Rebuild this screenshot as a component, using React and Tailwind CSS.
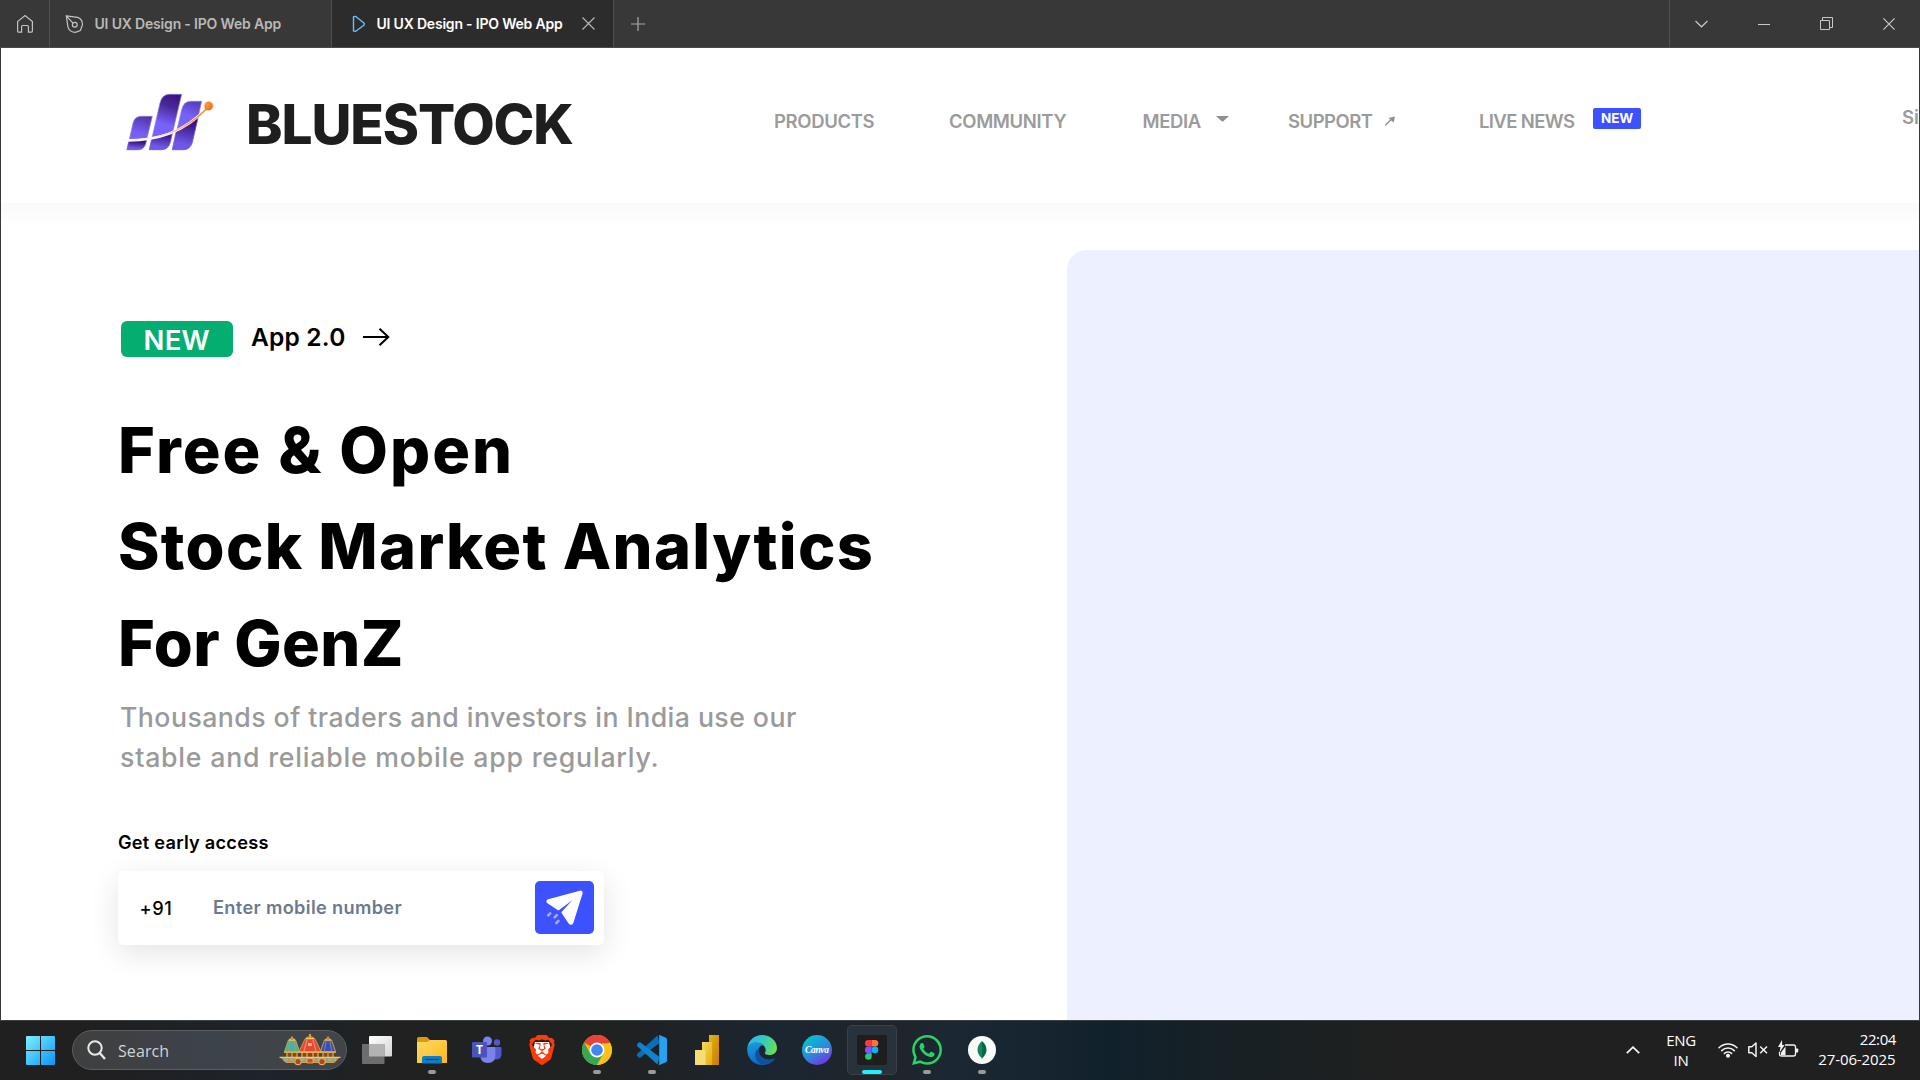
import { SiBrave, SiWhatsapp } from "react-icons/si";

function TitleBar() {
  return (
    <div className="flex h-12 shrink-0 border-b border-[#4a4a4a] bg-[#383838] text-[14px] leading-[47px] font-semibold text-[#b9b9b9]">
      <div className="flex w-[50px] items-center justify-center border-r border-[#505050]">
        <svg width="18" height="20" viewBox="0 0 18 20" fill="none" stroke="#c4c4c4" strokeWidth="1.2">
          <path d="M1.6 7.6 9 1.6l7.400 6v9.300a1.300 1.300 0 0 1-1.300 1.300h-2.700v-5.500a1.200 1.200 0 0 0-1.200-1.200H6.800a1.200 1.200 0 0 0-1.200 1.200v5.500H2.900a1.300 1.300 0 0 1-1.300-1.300z" />
        </svg>
      </div>
      <div className="flex w-[282px] items-center border-r border-[#505050]">
        <svg className="ml-[15px]" width="19" height="20" viewBox="0 0 19 20" fill="none" stroke="#c4c4c4" strokeWidth="1.200">
          <path d="M1.300 1.800 12.600 3.400c3 1 5 4.100 4.800 7.700l-2.100 5.400-4.800 1.800c-3.600-.1-6.700-2.400-7.600-5.500zM1.300 1.800l6.700 7.300" />
          <circle cx="9.800" cy="10.700" r="2.400" />
        </svg>
        <span className="ml-[10.500px] tracking-[-0.180px] whitespace-nowrap">UI UX Design - IPO Web App</span>
      </div>
      <div className="flex w-[282px] items-center border-r border-[#505050] bg-[#2c2c2c] text-white">
        <svg className="ml-[19.500px]" width="14" height="18" viewBox="0 0 14 18" fill="none" stroke="#6cbcff" strokeWidth="1.400" strokeLinejoin="round">
          <path d="M1.500 1.600v14.400l2.300 .2 8.400-6.200v-1.800L3.800 1.500z" />
        </svg>
        <span className="ml-[11px] w-[190px] tracking-[-0.200px] whitespace-nowrap">UI UX Design - IPO Web App</span>
        <svg className="ml-[15px]" width="13" height="13" viewBox="0 0 13 13" stroke="#b4b4b4" strokeWidth="1.200">
          <path d="m.500.500 12 12m0-12-12 12" />
        </svg>
      </div>
      <div className="flex flex-1 items-center">
        <svg className="ml-[17px]" width="14" height="14" viewBox="0 0 14 14" stroke="#a8a8a8" strokeWidth="1.200">
          <path d="M7 0v14M0 7h14" />
        </svg>
      </div>
      <div className="flex w-[251px] items-center border-l border-[#505050]">
        <svg className="ml-[25px]" width="13" height="8" viewBox="0 0 13 8" fill="none" stroke="#c8c8c8" strokeWidth="1.200">
          <path d="m.500 1 6 5.800 6-5.800" />
        </svg>
        <div className="mt-[2px] ml-[50px] h-px w-3 bg-[#c8c8c8]" />
        <svg className="ml-[50px]" width="13" height="13" viewBox="0 0 13 13" fill="none" stroke="#c8c8c8">
          <path d="M.500 3.500h9v9h-9zM2.500 3V.500h10v10H10" />
        </svg>
        <svg className="ml-[50px]" width="12" height="12" viewBox="0 0 12 12" stroke="#c8c8c8" strokeWidth="1.200">
          <path d="m.400.400 11.200 11.200m0-11.200L.400 11.600" />
        </svg>
      </div>
    </div>
  );
}

function Logo() {
  return (
    <svg width="104" height="72" viewBox="0 0 312 216">
      <defs>
        <linearGradient id="upA" x1="0.600" y1="0" x2="0.400" y2="1">
          <stop offset="0" stopColor="#5536aa" />
          <stop offset="0.500" stopColor="#755ff5" />
          <stop offset="1" stopColor="#7a63ff" />
        </linearGradient>
        <linearGradient id="upB" x1="0.600" y1="0" x2="0.400" y2="1">
          <stop offset="0" stopColor="#3d1683" />
          <stop offset="0.200" stopColor="#4a2798" />
          <stop offset="0.550" stopColor="#7862ff" />
          <stop offset="1" stopColor="#7862ff" />
        </linearGradient>
        <linearGradient id="upC" x1="0.600" y1="0" x2="0.400" y2="1">
          <stop offset="0" stopColor="#5a3fbe" />
          <stop offset="0.300" stopColor="#7862ff" />
          <stop offset="1" stopColor="#7862ff" />
        </linearGradient>
        <linearGradient id="low" x1="0.600" y1="0" x2="0.400" y2="1">
          <stop offset="0" stopColor="#2f0b6b" />
          <stop offset="0.300" stopColor="#3d1b8c" />
          <stop offset="0.850" stopColor="#6e58ea" />
        </linearGradient>
        <linearGradient id="trail" x1="0" y1="0" x2="1" y2="0">
          <stop offset="0" stopColor="#ffffff" />
          <stop offset="0.450" stopColor="#fdebdc" />
          <stop offset="0.800" stopColor="#fb9a3c" />
          <stop offset="1" stopColor="#fa7d14" />
        </linearGradient>
        <radialGradient id="dot" cx="0.400" cy="0.400" r="0.600">
          <stop offset="0" stopColor="#ff9a45" />
          <stop offset="1" stopColor="#f56a10" />
        </radialGradient>
        <clipPath id="below">
          <path d="M0 162C110 164 190 142 266 62V216H0z" />
        </clipPath>
      </defs>
      <g stroke="#8e78d8" strokeWidth="2">
        <path fill="url(#upA)" d="M21 191 39 112q5-21 24-21h34L77 172q-5 19-23 19z" />
        <path fill="url(#upB)" d="M88 191 120 51q6-26 29-26h36L151 168q-6 23-27 23z" />
        <path fill="url(#upC)" d="M157 191 185 71q6-25 28-25h32L217 168q-6 23-27 23z" />
      </g>
      <g clipPath="url(#below)" fill="url(#low)" stroke="#7c68cc" strokeWidth="2">
        <path d="M21 191 28 160h52l-3 12q-5 19-23 19z" />
        <path d="M88 191 98 146l61-18-8 40q-6 23-27 23z" />
        <path d="M157 191 170 128l67-44-20 84q-6 23-27 23z" />
      </g>
      <path d="M18 163C110 164 190 142 266 62" fill="none" stroke="#fff" strokeWidth="8" />
      <path d="M0 162C110 164 190 142 266 62" fill="none" stroke="url(#trail)" strokeWidth="4.500" />
      <circle cx="266" cy="60" r="16" fill="#fa8a30" opacity="0.200" />
      <circle cx="266" cy="60" r="12.500" fill="url(#dot)" />
    </svg>
  );
}

function SiteHeader() {
  return (
    <header className="flex h-[155px] shrink-0 pl-[119px] text-[18.500px] leading-6 font-semibold whitespace-nowrap text-[#9b9b9b]">
      <div className="mt-[38px] w-[104px]">
        <Logo />
      </div>
      <h2 className="mt-[46px] ml-[22px] w-[528px] text-[55px] leading-[60px] font-extrabold tracking-[-1.120px] text-[#1e1e1e]">
        BLUESTOCK
      </h2>
      <nav className="mt-[61px] flex">
        <span className="w-[175px] tracking-[-0.350px]">PRODUCTS</span>
        <span className="w-[193.500px] tracking-[-0.350px]">COMMUNITY</span>
        <span className="flex w-[145.500px] tracking-[-0.400px]">
          MEDIA
          <svg className="mt-[6.500px] ml-[15px]" width="13" height="6" viewBox="0 0 13 6" fill="#8f8f8f">
            <path d="M0 0h13L7 5.600H6z" />
          </svg>
        </span>
        <span className="flex w-[191px] tracking-[-0.500px]">
          SUPPORT
          <svg className="mt-[6.500px] ml-[11px]" width="12" height="10" viewBox="0 0 12 10" fill="#8f8f8f" stroke="#8f8f8f">
            <path d="m1.200 9.200 6.500-6.200" strokeWidth="1.300" />
            <path d="m4.500 2 6.500-1.500-1.400 6z" stroke="none" />
          </svg>
        </span>
        <span className="w-[114px] tracking-[-0.620px]">LIVE NEWS</span>
        <span className="-mt-px h-[20.500px] w-[48px] rounded-[2px] bg-[#3c51ff] text-center text-[13.500px] leading-[21px] font-bold tracking-[-0.200px] text-white">
          NEW
        </span>
        <span className="-mt-[4px] ml-[261px]">Si</span>
      </nav>
    </header>
  );
}

function Hero() {
  return (
    <main className="flex min-h-0 flex-1 bg-linear-to-b from-[#fafafa] via-[#fefefe] via-[20px] to-white to-[28px]">
      <section className="w-[1066px] shrink-0 pl-[117px] whitespace-nowrap">
        <div className="mt-[118px] ml-[2px] flex h-9 items-start">
          <span className="ml-[0.500px] h-[35.500px] w-[112.500px] rounded-[6px] bg-[#04ae71] text-center text-[27.500px] leading-[38px] font-semibold tracking-[0.230px] text-white">
            NEW
          </span>
          <span className="ml-[18px] w-[95px] text-[24.500px] leading-[33px] font-semibold tracking-[0.200px] text-black">App 2.0</span>
          <svg className="mt-[7px] ml-[16px]" width="28" height="18" viewBox="0 0 28 18" fill="none" stroke="#000" strokeWidth="2">
            <path d="M1 9h25.500M17.500.700 26.300 9l-8.800 8.300" />
          </svg>
        </div>
        <h1 className="mt-[45px] text-[63px] leading-[96.300px] font-extrabold text-black">
          <span className="block tracking-[2.050px]">Free &amp; Open</span>
          <span className="block tracking-[1.280px]">Stock Market Analytics</span>
          <span className="block tracking-[0.400px]">For GenZ</span>
        </h1>
        <p className="mt-[6px] ml-[2px] text-[26.700px] leading-[40px] font-[450] text-[#9a9a9a]">
          <span className="block tracking-[0.440px]">Thousands of traders and investors in India use our</span>
          <span className="block tracking-[0.780px]">stable and reliable mobile app regularly.</span>
        </p>
        <p className="mt-[53px] text-[18.200px] leading-6 font-semibold tracking-[0.240px] text-black">Get early access</p>
        <div className="mt-[17px] flex h-[74px] w-[486px] items-center rounded-[5px] bg-white text-[18.200px] leading-6 shadow-[0_8px_30px_rgba(0,0,0,0.110)]">
          <span className="ml-[21.500px] w-[73.500px] font-medium tracking-[0.600px] text-black">+91</span>
          <span className="mb-[2px] w-[322px] font-semibold tracking-[0.340px] text-[#6b7a90]">Enter mobile number</span>
          <span className="flex h-[53px] w-[58.500px] items-center justify-center rounded-[5px] bg-[#3c51ff]">
            <svg width="37" height="35" viewBox="0 0 37 35">
              <path
                fill="#fff"
                stroke="#fff"
                strokeWidth="2"
                strokeLinejoin="round"
                d="M34 1.600 2.500 10.200q-2 1 -.5 2.300L12.500 19.300 26 9.300q2 0 1 1.500L16.500 22.500l6.800 10.300q1.600 1.800 3 .1L35.600 3.200q.3-1.800-1.600-1.600z"
              />
              <g stroke="#a3adff" strokeWidth="2.600" strokeLinecap="round">
                <path d="m2.200 25.300 2-2M8.600 27.300l2.200-2.200M10.300 33l2.200-2.200" />
              </g>
            </svg>
          </span>
        </div>
      </section>
      <section className="mt-[47px] flex-1 rounded-tl-[20px] bg-[#ecf0ff]" />
    </main>
  );
}

function Chariots() {
  return (
    <svg width="62" height="32" viewBox="0 0 62 32">
      {[
        ["#45b3a2", 13],
        ["#3450c0", 49],
      ].map(([main, x]) => (
        <g key={x} transform={`translate(${x} 6)`}>
          <path d="M-3.500 0Q0-3.500 3.500 0l4 11.500h-15z" fill={main} stroke="#d9a83c" strokeWidth="0.900" />
          <path d="M-2 1-3.500 11M2 1l1.500 10" stroke="#e88a5a" strokeWidth="0.900" opacity="0.700" />
          <path d="M-3 0h6" stroke="#f0c850" strokeWidth="1.500" />
          <path d="M0-3.500V0" stroke="#d98a38" strokeWidth="2" />
          <path d="M-8 11.500h16v1.500H-8z" fill="#e0aa35" />
          <path d="M-6 13H6v4H-6z" fill="#7c4a38" />
          <path d="M-5 13v4M0 13v4M5 13v4" stroke="#e0aa35" strokeWidth="1.200" />
        </g>
      ))}
      <path d="M26 5Q31 0 36 5l6 12.500H20z" fill="#e2483f" stroke="#d9a03c" strokeWidth="0.900" />
      <path d="M28 6 25 17M34 6l3 11" stroke="#f59a60" strokeWidth="1.200" opacity="0.800" />
      <path d="M27 4.500h8" stroke="#f0c850" strokeWidth="1.500" />
      <path d="M31 0v4" stroke="#e09a38" strokeWidth="2" />
      <path d="M29 9h4v3h-4z" fill="#f3b860" />
      <path d="M19 17.500h24v1.500H19z" fill="#e8b440" />
      <path d="M22 19h18v4H22z" fill="#86403a" />
      <path d="M23 19v4M28 19v4M34 19v4M39 19v4" stroke="#e0aa35" strokeWidth="1.300" />
      <path d="M1 23h60l-5 5.500H6z" fill="#c98f3a" />
      <path d="M5 25.500h52" stroke="#7fb9c8" strokeWidth="2.400" strokeDasharray="4 1.500" />
      <path d="M.500 23.300h61" stroke="#f2cc55" strokeWidth="1.200" />
      <path d="M7 28.500h48" stroke="#d8a040" />
      <circle cx="19" cy="27.500" r="3.200" fill="#a8483a" stroke="#e3b04a" strokeWidth="1.200" />
      <circle cx="43" cy="27.500" r="3.200" fill="#a8483a" stroke="#e3b04a" strokeWidth="1.200" />
      <path d="M28 24.500h6v4.500h-6z" fill="#d04a3a" stroke="#e3c04a" strokeWidth="0.800" />
    </svg>
  );
}

function TaskButton({ children, running, active }) {
  return (
    <div
      className={
        active
          ? "-mx-px box-border flex h-[50px] w-[50px] flex-col items-center rounded-[5px] border border-[#3a4148] bg-[#28323b] pt-[9px]"
          : "flex h-[50px] w-[48px] flex-col items-center pt-[10px]"
      }
    >
      <div className="flex h-[30px] w-[30px] items-center justify-center">{children}</div>
      {active && <div className="mt-[5px] h-1 w-5 shrink-0 rounded-full bg-[#22eeff]" />}
      {running && <div className="mt-[5px] h-1 w-2 shrink-0 rounded-full bg-[#9a9a9a]" />}
    </div>
  );
}

function Taskbar() {
  return (
    <footer className="flex h-[60px] shrink-0 border-t border-[#3b4042] bg-[linear-gradient(90deg,#202020_0%,#202022_6%,#1d242a_14%,#212121_20%,#202121_32%,#1b2631_41%,#202428_46%,#1b2834_50%,#11212b_58%,#172024_64%,#202020_73%)] pt-[4px] font-['Open_Sans',sans-serif] text-white">
      <svg className="mt-[11px] ml-[26px]" width="29" height="29" viewBox="0 0 29 29">
        <defs>
          <linearGradient id="win" x1="0" y1="0" x2="1" y2="1">
            <stop offset="0" stopColor="#7cf0ff" />
            <stop offset="1" stopColor="#0c94f7" />
          </linearGradient>
        </defs>
        <path fill="url(#win)" d="M0 1q0-1 1-1h13v14H0zM15 0h13q1 0 1 1v13H15zM0 15h14v14H1q-1 0-1-1zM15 15h14v13q0 1-1 1H15z" />
      </svg>
      <div className="mt-[5px] ml-[17px] flex h-10 w-[275px] items-center rounded-full border border-[#5b5d5f] bg-linear-to-r from-[#3f3f3f] via-[#3d434b] to-[#424548]">
        <svg className="ml-[14px]" width="19" height="20" viewBox="0 0 19 20" fill="none" stroke="#e8e8e8" strokeWidth="2">
          <circle cx="8" cy="8" r="6.700" />
          <path d="m12.700 13 5.300 6" strokeWidth="2.400" />
        </svg>
        <span className="mt-[2px] ml-[12px] w-[161px] text-[16px] leading-5 tracking-[0.100px] text-[#d2d2d2]">Search</span>
        <Chariots />
      </div>
      <div className="ml-[5px] flex">
        <div className="flex w-[52px] justify-center pr-[3px]">
          <TaskButton>
            <svg width="30" height="30" viewBox="0 0 30 30">
              <defs>
                <linearGradient id="tv" x1="0" y1="0" x2="1" y2="1">
                  <stop offset="0" stopColor="#ffffff" />
                  <stop offset="1" stopColor="#d5d5d5" />
                </linearGradient>
              </defs>
              <rect x="7" y="1" width="23" height="20.500" rx="1" fill="url(#tv)" />
              <rect x="0" y="9" width="22.500" height="20" rx="1" fill="#6d6d6d" />
              <rect x="7" y="9" width="15.500" height="12.500" fill="#b3b3b3" />
            </svg>
          </TaskButton>
        </div>
        <div className="ml-[4px] flex gap-[7px]">
          <TaskButton running>
            <svg width="30" height="30" viewBox="0 0 30 30">
              <defs>
                <linearGradient id="fold" x1="0" y1="0" x2="1" y2="1">
                  <stop offset="0" stopColor="#ffd968" />
                  <stop offset="1" stopColor="#fcb913" />
                </linearGradient>
              </defs>
              <path d="M0 4q0-2 2-2h8l3 3v3H0z" fill="#dc9a08" />
              <path d="M0 7h10l3-2h15.500q1.500 0 1.500 1.500V28H0z" fill="url(#fold)" />
              <path d="M5 28.500V23q0-2 2-2h16q2 0 2 2v5.500z" fill="#0f7cc9" />
              <path d="M8 24.500h14" stroke="#0a4d86" strokeWidth="1.200" />
            </svg>
          </TaskButton>
          <TaskButton>
            <svg width="30" height="30" viewBox="0 0 30 30">
              <circle cx="15.500" cy="6" r="4.500" fill="#7b83eb" />
              <circle cx="25" cy="7.500" r="3.200" fill="#5059c9" />
              <path d="M20 12h8.500q1 0 1 1v6q0 5-5 5.500H20z" fill="#5059c9" />
              <path d="M9 12h13.500q.8 0 .8 1v8q0 7-7.500 7T8.500 21z" fill="#7b83eb" />
              <rect x="0" y="7" width="15" height="15.500" rx="1.200" fill="#4b53bc" />
              <text x="7.500" y="19" fontSize="12" fontWeight="700" fill="#fff" textAnchor="middle">T</text>
            </svg>
          </TaskButton>
          <TaskButton>
            <svg width="30" height="30" viewBox="0 0 30 30">
              <path d="M8 7h14l2 8-4 8-5 4-5-4-4-8z" fill="#fff" />
              <SiBrave size={30} color="#ff3a0a" />
            </svg>
          </TaskButton>
          <TaskButton running>
            <svg width="30" height="30" viewBox="0 0 48 48">
              <circle cx="24" cy="24" r="24" fill="#fbbc05" />
              <path d="M24 24 3.200 12A24 24 0 0 1 44.800 12z" fill="#ea4335" />
              <path d="M3.200 12h41.600L24 13z" fill="#ea4335" />
              <path d="M3.200 12A24 24 0 0 0 24 48l10.400-18H13.600z" fill="#34a853" />
              <path d="M24 48 34.400 30 32 13h13.200A24 24 0 0 1 24 48z" fill="#fbc116" />
              <circle cx="24" cy="24" r="12" fill="#fff" />
              <circle cx="24" cy="24" r="9.300" fill="#4285f4" />
            </svg>
          </TaskButton>
          <TaskButton running>
            <svg width="30" height="30" viewBox="0 0 30 30">
              <path d="M0 20.500q-.6-.8 0-1.600L20.500.500l2 7.500L3.500 22.600q-1 .6-1.800-.200z" fill="#0b6fb8" />
              <path d="M0 9.500q-.6.800 0 1.600L20.500 29.500l2-7.500L3.500 7.400q-1-.6-1.800.200z" fill="#1083cc" />
              <path d="M21.500.200Q22.200-.1 23 .2l6 2.600q1 .5 1 1.600v21.200q0 1.100-1 1.600l-6 2.600q-.8.400-1.700-.200.900.200.9-1V1.400q0-1.200-.7-1.200z" fill="#26a2f2" />
            </svg>
          </TaskButton>
          <TaskButton>
            <svg width="24" height="30" viewBox="0 0 24 30">
              <defs>
                <linearGradient id="pbi" x1="0" y1="0" x2="1" y2="1">
                  <stop offset="0" stopColor="#e8b30f" />
                  <stop offset="1" stopColor="#c8770e" />
                </linearGradient>
                <linearGradient id="pbj" x1="0" y1="0" x2="1" y2="1">
                  <stop offset="0" stopColor="#f8d95a" />
                  <stop offset="1" stopColor="#e6ac10" />
                </linearGradient>
              </defs>
              <path d="M14 0h10v30H14z" fill="url(#pbi)" />
              <path d="M7 7h10v23H7z" fill="url(#pbj)" />
              <path d="M0 15h10.500v15H0z" fill="#f6dc74" />
            </svg>
          </TaskButton>
          <TaskButton>
            <svg width="30" height="30" viewBox="0 0 30 30">
              <defs>
                <linearGradient id="edgeTop" x1="0" y1="0.300" x2="1" y2="0.500">
                  <stop offset="0" stopColor="#2fb5ee" />
                  <stop offset="0.550" stopColor="#36cbb8" />
                  <stop offset="1" stopColor="#6bdf54" />
                </linearGradient>
                <linearGradient id="edgeLow" x1="0" y1="0" x2="0.400" y2="1">
                  <stop offset="0" stopColor="#1b9de2" />
                  <stop offset="1" stopColor="#0b66c4" />
                </linearGradient>
              </defs>
              <path d="M.3 12.500C1.500 5.300 7.600 0 15 0c8.400 0 15 6 15 13 0 4.600-3.500 7-7.400 7-3.400 0-5.200-1.200-4.800-2 1.400-2 1.200-5-1.100-7.300C12.500 6.400 3.500 7 .3 12.500z" fill="url(#edgeTop)" />
              <path d="M.3 12.500C3 6.500 12 5.500 16.700 10.700c-4-1-6 3-4.700 7 1.400 4.300 5 7.300 11 7 2-.2 4-1 5-1.500C25.500 27.500 20.500 30 15 30 6.500 30-.8 22.500.3 12.500z" fill="url(#edgeLow)" />
              <path d="M12 13c-4 2-5 8-2 12.500 2 3 5 4.500 7 4.300 4.500-.5 8.500-3 11-6.600-3.500 1.800-8 2-11.500.3C12.500 21.500 11 17 12 13z" fill="#124f9e" />
            </svg>
          </TaskButton>
          <TaskButton>
            <svg width="30" height="30" viewBox="0 0 30 30">
              <defs>
                <linearGradient id="cnv" x1="0.200" y1="0" x2="0.800" y2="1">
                  <stop offset="0" stopColor="#00c9cc" />
                  <stop offset="0.550" stopColor="#2f86dc" />
                  <stop offset="1" stopColor="#7d2ae8" />
                </linearGradient>
              </defs>
              <circle cx="15" cy="15" r="15" fill="url(#cnv)" />
              <text x="15" y="18" fontSize="9.500" fontStyle="italic" fontWeight="700" fontFamily="Liberation Serif, serif" fill="#fff" textAnchor="middle" textLength="24">
                Canva
              </text>
            </svg>
          </TaskButton>
          <TaskButton active>
            <svg width="30" height="30" viewBox="0 0 30 30">
              <rect width="30" height="30" rx="2" fill="#1e1e1e" />
              <path d="M14.700 5H11.300a3.300 3.300 0 0 0 0 6.600h3.400z" fill="#ff3737" />
              <path d="M14.700 5H18a3.300 3.300 0 0 1 0 6.600h-3.300z" fill="#ff7237" />
              <path d="M14.700 11.600H11.300a3.300 3.300 0 0 0 0 6.600h3.400z" fill="#874fff" />
              <circle cx="18" cy="14.900" r="3.300" fill="#00b6ff" />
              <path d="M14.700 18.200H11.300a3.300 3.300 0 1 0 3.400 3.300z" fill="#24cb71" />
            </svg>
          </TaskButton>
          <TaskButton running>
            <SiWhatsapp size={30} color="#25d366" />
          </TaskButton>
          <TaskButton running>
            <svg width="28" height="28" viewBox="0 0 28 28">
              <circle cx="14" cy="14" r="14" fill="#fafafa" />
              <path d="M14 5c3.500 3.200 4.500 6 4.500 9 0 3.500-2 6-4.200 8L14 24z" fill="#00684a" />
              <path d="M14 5c-3.500 3.200-4.500 6-4.500 9 0 3.500 2 6 4.200 8L14 24z" fill="#11875c" />
            </svg>
          </TaskButton>
        </div>
      </div>
      <div className="flex-1" />
      <div className="flex w-[294px] text-[15px] leading-5">
        <svg className="mt-[21px]" width="14" height="8" viewBox="0 0 14 8" fill="none" stroke="#f2f2f2" strokeWidth="1.800">
          <path d="m.800 7.200 6.200-6 6.200 6" />
        </svg>
        <div className="mt-[5px] ml-[23px] w-[36px] text-center tracking-[-0.300px]">
          ENG
          <br />
          IN
        </div>
        <svg className="mt-[17px] ml-[19px]" width="20" height="16" viewBox="0 0 20 16" fill="none" stroke="#f2f2f2" strokeWidth="1.500" strokeLinecap="round">
          <path d="M1 5.700a12.700 12.700 0 0 1 18 0M3.700 8.600a8.900 8.900 0 0 1 12.600 0M6.400 11.400a5.100 5.100 0 0 1 7.200 0" />
          <circle cx="10" cy="13.800" r="1.300" fill="#f2f2f2" />
        </svg>
        <svg className="mt-[17px] ml-[10px]" width="20" height="16" viewBox="0 0 20 16" fill="none" stroke="#f2f2f2" strokeWidth="1.500" strokeLinejoin="round">
          <path d="M.800 4.800v6h3L8 14.500V1L3.800 4.800zM12.200 4.500l6.800 6.800M19 4.500l-6.800 6.800" />
        </svg>
        <svg className="mt-[15px] ml-[10px]" width="21" height="18" viewBox="0 0 21 18" fill="none" stroke="#f2f2f2" strokeWidth="1.300">
          <path d="M7 5h8.500q2 0 2 2v7q0 2-2 2H3.500q-2 0-2-2v-2" />
          <path d="M18 8.500h1.500q.7 0 .700.700v2.600q0 .700-.700.700H18z" fill="#f2f2f2" stroke="none" />
          <path d="M4 0 0 7h2.500L1.500 12.500 6.500 5H4.200z" fill="#f2f2f2" stroke="none" />
          <path d="M3 15v-2.500L7.500 6.500V15z" fill="#f2f2f2" stroke="none" />
        </svg>
        <div className="mt-[4px] ml-[9px] w-[88px] text-right tracking-[-0.100px]">
          <div className="tracking-[-0.400px]">22:04</div>
          <div className="pr-[0.500px]">27-06-2025</div>
        </div>
      </div>
    </footer>
  );
}

export default function App() {
  return (
    <div className="flex h-[1080px] w-[1920px] flex-col overflow-hidden bg-[#383838] font-['Inter',sans-serif]">
      <TitleBar />
      <div className="mx-px flex min-h-0 flex-1 flex-col overflow-hidden bg-white">
        <SiteHeader />
        <Hero />
      </div>
      <Taskbar />
    </div>
  );
}
